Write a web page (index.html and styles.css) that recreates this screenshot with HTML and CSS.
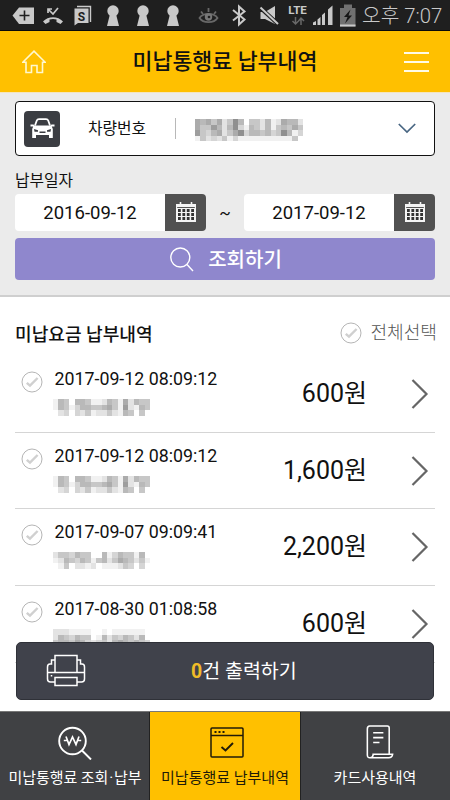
FILE: index.html
```
<!DOCTYPE html>
<html lang="ko">
<head>
<meta charset="utf-8">
<title>미납통행료 납부내역</title>
<link rel="stylesheet" href="styles.css">
</head>
<body>
<svg width="0" height="0" class="defs">
  <symbol id="check" viewBox="0 0 22 22"><circle cx="11" cy="11" r="10" fill="#fff" stroke="#b5b5b5"/><path d="M5.8 11.8 9 14.7 16.6 7" fill="none" stroke="#d0d0d0" stroke-width="2.4"/></symbol>
  <symbol id="arrow" viewBox="0 0 18 32"><path d="M1.5 2 15.5 16 1.5 30" fill="none" stroke="#666" stroke-width="2.2"/></symbol>
  <symbol id="calendar" viewBox="0 0 20 20"><path d="M0 2H20V20H0Z" fill="#f4f4f4"/><path d="M1.2 5.500H18.800" stroke="#555" stroke-width="1"/><path d="M4.5 0V4M15.5 0V4" stroke="#f4f4f4" stroke-width="1.6"/><path d="M2 8.500H18M2 12.500H18M2 16.500H18" stroke="#333" stroke-width="3" stroke-dasharray="2.800 1.600"/></symbol>
  <symbol id="keyhole" viewBox="0 0 12 22"><circle cx="6" cy="6" r="5.7"/><path d="M3 9H9L12 21H0Z"/></symbol>
</svg>
<div class="app">
  <div class="status">
    <svg class="status-icons" width="358" height="30" viewBox="0 0 358 30" fill="#c9c9c9">
      <path d="M12.5 15.5 19 7.500H34V24H19Z"/><path d="M24.500 10.500V20.500M19.500 15.500H29.500" stroke="#1f1f1f" stroke-width="1.6"/>
      <path d="M43 21.500C48 15.700 58 15.700 63 21.500L60.500 24 56.500 22V19.500C54 18.700 52 18.700 49.500 19.500V22L45.500 24Z"/><path d="M48 13V9H52M48 9 53 14 58 8" fill="none" stroke="#c9c9c9" stroke-width="1.700"/>
      <path d="M77 6.500H90.500V22" fill="none" stroke="#c9c9c9" stroke-width="1.400"/><path d="M74.500 8.500H88.500V23H78L74.500 25.500Z"/><text x="81.500" y="20.500" class="badge-letter">S</text>
      <use href="#keyhole" x="107" y="5" width="12" height="22"/><use href="#keyhole" x="137" y="5" width="12" height="22"/><use href="#keyhole" x="167" y="5" width="12" height="22"/>
      <g fill="none" stroke="#686868" stroke-width="1.800"><path d="M199.500 18C203 12.500 214 12.500 217.500 18C214 23.500 203 23.500 199.500 18Z"/><path d="M201 11.500 203 14M208.500 8V12M216 11.500 214 14"/></g><circle cx="208.500" cy="17" r="3.700" fill="#777"/><circle cx="209" cy="17" r="1.300" fill="#1f1f1f"/>
      <path d="M233 10 244.500 19.500 239 24.500V6.500L244.500 11.500 233 20.500" fill="none" stroke="#c9c9c9" stroke-width="2"/>
      <path d="M260.500 12H265L275 6V24L265 19H260.500Z"/><path d="M259.500 7 277.500 23.500" stroke="#1f1f1f" stroke-width="4"/><path d="M260.500 7.500 278 24" stroke="#c9c9c9" stroke-width="2"/>
      <text x="297.500" y="14" class="network">LTE</text>
      <path d="M295.500 17V24M292.500 21 295.500 24 298.500 21M301 25V18M298.500 21 301 18 304 21" fill="none" stroke="#686868" stroke-width="1.500"/>
      <path d="M313 25V22.500L316 21V25ZM317.500 25V19.500L320.500 17V25ZM322 25V15L325 12.500V25ZM328 25V9.500L332.500 5.500V25Z"/>
      <path d="M344 4.500H352V8H355.500V26.500H340V8H344Z" fill="#707070"/><path d="M340 24.500H355.500V26.500H340Z"/><path d="M350.500 9.500 344 17H347.500L345 23.500 352 15.500H348.500Z" fill="#161616"/>
    </svg>
    <span class="clock">오후 7:07</span>
  </div>
  <header class="header">
    <svg width="24" height="24" viewBox="0 0 24 24" fill="none" stroke="#fff8cf" stroke-width="1.600"><path d="M.8 12.300 12 1.200 23.200 12.300H20.500V22.500H15V15.500H9.500V22.500H4V12.300Z"/></svg>
    <h1>미납통행료 납부내역</h1>
    <svg width="25" height="22" viewBox="0 0 25 22" stroke="#fffbe6" stroke-width="1.800"><path d="M0 2H25M0 11H25M0 20H25"/></svg>
  </header>
  <section class="search">
    <div class="vehicle">
      <span class="car"><svg width="25" height="21" viewBox="0 0 25 21"><path d="M5 7.500 6.800 2.500Q7.300 1.200 9 1.200H16Q17.700 1.200 18.200 2.500L20 7.500" fill="none" stroke="#fff" stroke-width="1.800"/><path d="M.5 6.500H3.500L4.500 7.500H20.500L21.500 6.500H24.500V8.500H21.800L22.800 11V20H19V17H6V20H2.200V11L3.200 8.500H.5Z" fill="#fff"/><path d="M4 11 8 12.200V13.700H4.500ZM21 11 17 12.200V13.700H20.500ZM9.500 13.500H15.500V15H9.500Z" fill="#3b3d42"/></svg></span>
      <span class="vehicle-label">차량번호</span>
      <span class="divider"></span>
      <svg class="mosaic plate" data-mosaic="65646248504425126552 64475258315425145464 74356246835545348513 14232413111111111140" width="108" height="22"></svg>
      <svg width="18" height="11" viewBox="0 0 18 11"><path d="M.8 1 9 9 17.200 1" fill="none" stroke="#486682" stroke-width="1.700"/></svg>
    </div>
    <div class="date-title">납부일자</div>
    <div class="dates">
      <div class="date"><span>2016-09-12</span><i><svg width="20" height="20"><use href="#calendar"/></svg></i></div>
      <span class="tilde">~</span>
      <div class="date"><span>2017-09-12</span><i><svg width="20" height="20"><use href="#calendar"/></svg></i></div>
    </div>
    <button class="submit"><svg width="24" height="25" viewBox="0 0 24 25" fill="none" stroke="#fff" stroke-width="1.400"><circle cx="10.300" cy="10.500" r="9.500"/><path d="M17 17.500 23 24"/></svg><span>조회하기</span></button>
  </section>
  <main class="list">
    <div class="list-head"><h2>미납요금 납부내역</h2><span class="all"><svg width="22" height="22"><use href="#check"/></svg>전체선택</span></div>
    <div class="row"><svg class="tick" width="22" height="22"><use href="#check"/></svg><div class="info"><time>2017-09-12 08:09:12</time><svg class="mosaic" data-mosaic="154055411254162544 154135544564172154 023032412242154040" width="97" height="17"></svg></div><b>600원</b><svg class="go" width="18" height="32"><use href="#arrow"/></svg></div>
    <div class="row"><svg class="tick" width="22" height="22"><use href="#check"/></svg><div class="info"><time>2017-09-12 08:09:12</time><svg class="mosaic" data-mosaic="154055411254162544 154135544564172154 023032412242154040" width="97" height="17"></svg></div><b>1,600원</b><svg class="go" width="18" height="32"><use href="#arrow"/></svg></div>
    <div class="row"><svg class="tick" width="22" height="22"><use href="#check"/></svg><div class="info"><time>2017-09-07 09:09:41</time><svg class="mosaic" data-mosaic="244354400513544150 125435414524654241 014022120111243030" width="97" height="17"></svg></div><b>2,200원</b><svg class="go" width="18" height="32"><use href="#arrow"/></svg></div>
    <div class="row"><svg class="tick" width="22" height="22"><use href="#check"/></svg><div class="info"><time>2017-08-30 01:08:58</time><svg class="mosaic" data-mosaic="222111100101111110 254354401524354250 455465323425654543" width="97" height="17"></svg></div><b>600원</b><svg class="go" width="18" height="32"><use href="#arrow"/></svg></div>
  </main>
  <button class="print">
    <svg width="40" height="33" viewBox="0 0 40 33" fill="none" stroke="#fff" stroke-width="1.500"><path d="M9 18V1.500H31V18M1 18.500H39M9 6H5.500V10H4Q1.500 10 1.500 13V25Q1.500 28 4.500 28H9M31 6H34.500V10H36Q38.500 10 38.500 13V25Q38.500 28 35.500 28H31M9 23.500H31V31.500H9ZM5.500 21V22.500"/></svg>
    <span><em>0</em>건 출력하기</span>
  </button>
  <nav class="tabs">
    <a><svg width="34" height="34" viewBox="0 0 34 34" fill="none" stroke="#fff" stroke-width="1.900"><circle cx="14.500" cy="15" r="13.300"/><path d="M24 24.500 33 33.500"/><path d="M8 10.500 11 18.500 14.500 11 18 18.500 21 10.500M5.800 14.500H9.500M19.500 14.500H23.200" stroke-width="1.700"/></svg><span>미납통행료 조회<small>·</small>납부</span></a>
    <a class="active"><svg width="34" height="34" viewBox="0 0 34 34" fill="none" stroke="#211b08" stroke-width="1.500"><rect x="1" y="2" width="32" height="29" rx="1"/><path d="M1 9.500H33"/><path d="M11.500 21 15.500 24.500 23 17" stroke-width="1.900"/><path d="M4.500 6H6.500M8.500 6H10.500M12.500 6H14.500" stroke-width="2"/></svg><span>미납통행료 납부내역</span></a>
    <a class="card"><svg width="34" height="35" viewBox="0 0 34 35" fill="none" stroke="#fff" stroke-width="1.600"><path d="M27.500 29.500V3Q27.500 1 25.500 1H7.500Q5 1 5 4V31Q5 34 8 33.700H27Q30.500 33.700 31 30.200H11Q11 33.500 8 33.700M11 8H21.500M11 13H21.500M11 18H17.500"/></svg><span>카드사용내역</span></a>
  </nav>
</div>
<script src="script.js"></script>
</body>
</html>
```
FILE: styles.css
```
* { box-sizing: border-box; }
body { margin: 0; background: #fff; color: #111; font-family: Roboto, "Noto Sans CJK KR", sans-serif; }
h1, h2 { margin: 0; font-weight: 500; white-space: nowrap; }
svg { display: block; flex: none; }
button { border: 0; padding: 0; font-family: inherit; }
.defs { position: absolute; }
.app { position: relative; width: 450px; height: 800px; overflow: hidden; }
.status { height: 31px; display: flex; background: #1f1f1f; border-bottom: 1px solid #090909; color: #c9c9c9; }
.badge-letter { font: bold 12px Roboto, sans-serif; text-anchor: middle; fill: #1f1f1f; }
.network { font: bold 11.500px Roboto, sans-serif; text-anchor: middle; }
.clock { margin-left: 4px; font-size: 20.300px; line-height: 32px; white-space: nowrap; font-weight: 300; }
.header { height: 62px; padding: 0 21px 0 22px; display: flex; align-items: center; justify-content: space-between; background: #ffc000; border-bottom: 1px solid #f5e5bd; }
.header h1 { font-size: 21.700px; line-height: 60px; }
.search { height: 204px; padding: 8px 15px 0; background: #ebebeb; border-bottom: 2px solid #cfcfcf; }
.vehicle { height: 55px; display: flex; align-items: center; padding: 0 18px 0 8px; border: 1px solid #111; border-radius: 4px; background: #fff; }
.car { width: 36px; height: 36px; border-radius: 4px; background: #3b3d42; display: grid; place-items: center; }
.vehicle-label { margin-left: 28px; font-size: 15.800px; line-height: 24px; width: 60px; white-space: nowrap; }
.divider { width: 1px; height: 21px; margin-left: 27px; background: #b8b8b8; }
.plate { margin: 2px auto 0 19px; }
.date-title { margin-top: 11px; height: 27px; font-size: 15.800px; line-height: 27px; }
.dates { height: 37px; display: grid; grid-template-columns: 191px 38px 191px; align-items: center; }
.date { height: 37px; display: flex; overflow: hidden; background: #fff; border-radius: 4px; }
.date span { flex: 1; text-align: center; font-size: 18.500px; line-height: 38px; }
.date i { width: 41px; display: grid; place-items: center; background: #515151; }
.date i svg { margin-top: -1px; }
.tilde { text-align: center; font-size: 17px; }
.submit { width: 420px; height: 42px; margin-top: 7px; padding-left: 2px; display: flex; align-items: center; justify-content: center; gap: 14px; border-radius: 4px; background: #8f87cd; color: #fff; font-size: 20px; line-height: 26px; font-weight: 500; }
.submit span { margin-top: 1px; }
.list { padding: 0 15px; }
.list-head { height: 59px; padding-top: 12px; display: flex; justify-content: space-between; align-items: center; }
.list-head h2 { font-size: 18.100px; line-height: 26px; margin-top: 4px; }
.all { display: flex; align-items: center; gap: 8px; margin-right: -2px; font-size: 18.100px; line-height: 26px; color: #555; font-weight: 300; }
.row { height: 76.700px; display: flex; border-bottom: 1.500px solid #d5d5d5; }
.tick { margin: 15px 0 0 6px; }
.info { margin-left: 11px; width: 190px; }
.info time { display: block; margin: 12px 0 0 .5px; font-size: 17.800px; line-height: 22px; white-space: nowrap; }
.info .mosaic { margin: 9px 0 0 -1px; }
.row b { flex: 1; padding-right: 44px; text-align: right; font-size: 25px; line-height: 76px; font-weight: 400; white-space: nowrap; }
.go { margin: 22px 6px 0 0; }
.print { position: absolute; left: 16px; top: 642px; width: 418px; height: 58px; display: flex; align-items: center; border-radius: 5px; border: 1px solid #2f3138; background: #40424b; color: #fff; font-size: 19.500px; line-height: 28px; }
.print svg { margin: -1px 0 0 29px; }
.print span { margin: 1px 0 0 105px; white-space: nowrap; }
.print em { color: #f0bc28; font-weight: 700; font-style: normal; }
.tabs { position: absolute; left: 0; right: 0; top: 711px; height: 89px; display: grid; grid-template-columns: repeat(3, 1fr); border-top: 1px solid #777; background: #404144; color: #fff; }
.tabs a { display: flex; flex-direction: column; align-items: center; padding-top: 14px; font-size: 15px; line-height: 22px; white-space: nowrap; }
.tabs small { font-size: inherit; margin: 0 1px; }
.tabs svg { height: 34px; margin-bottom: 7px; }
.tabs .active { background: #ffc000; color: #211b08; box-shadow: -1px 0 #222, 1px 0 #222; }
.tabs .active svg { margin-left: 4px; }
.tabs .card svg { margin-left: 7px; margin-top: -1px; margin-bottom: 8px; }
.tabs a:first-child { letter-spacing: -.1px; }
```
FILE: script.js
```
// Masked values are drawn as grey blocks, one hex digit of darkness per block.
document.querySelectorAll('[data-mosaic]').forEach(svg => {
  const rows = svg.dataset.mosaic.split(' ');
  svg.setAttribute('viewBox', `0 0 ${rows[0].length} ${rows.length}`);
  svg.setAttribute('preserveAspectRatio', 'none');
  svg.setAttribute('shape-rendering', 'crispEdges');
  rows.forEach((row, y) => [...row].forEach((digit, x) => {
    const block = document.createElementNS('http://www.w3.org/2000/svg', 'rect');
    const shade = 255 - parseInt(digit, 16) * 14;
    block.setAttribute('x', x);
    block.setAttribute('y', y);
    block.setAttribute('width', 1);
    block.setAttribute('height', 1);
    block.setAttribute('fill', `rgb(${shade},${shade},${shade})`);
    svg.append(block);
  }));
});
```
